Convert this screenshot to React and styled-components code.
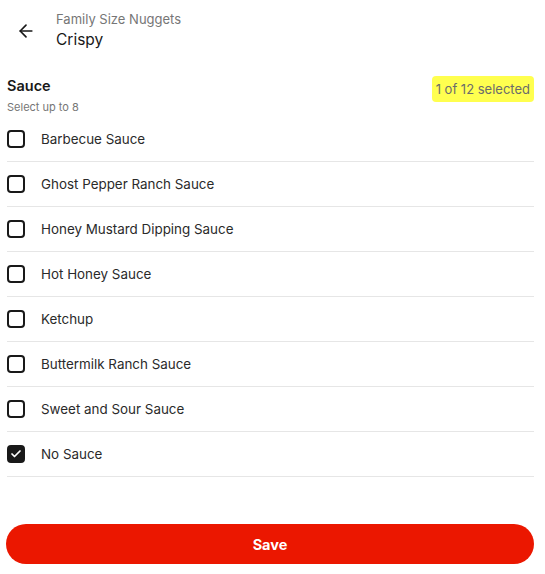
import React, { useState } from 'react';
import styled, { createGlobalStyle } from 'styled-components';
import { ArrowLeft, Check } from 'lucide-react';

const Global = createGlobalStyle`
  body {
    margin: 0;
    font-family: Inter, "Noto Sans", sans-serif;
    color: #191919;
    background: #fff;
  }
`;

const Page = styled.div`
  width: 545px;
  height: 574px;
  display: flex;
  flex-direction: column;
  padding: 0 11px 0 7px;
  box-sizing: border-box;
`;

const Header = styled.div`
  display: flex;
  align-items: center;
  gap: 20px;
  height: 62px;
  padding-left: 9px;
`;

const BackButton = styled.button`
  border: none;
  background: none;
  padding: 0;
  display: flex;
  color: #191919;
  cursor: pointer;
`;

const Titles = styled.div`
  display: flex;
  flex-direction: column;
  gap: 3px;
  padding-bottom: 2px;
`;

const Overline = styled.div`
  font-size: 13px;
  color: #767676;
`;

const Title = styled.div`
  font-size: 15.5px;
  color: #191919;
`;

const SectionHead = styled.div`
  display: flex;
  justify-content: space-between;
  align-items: flex-start;
  margin-top: 15px;
`;

const SectionName = styled.div`
  font-size: 14.5px;
  font-weight: 600;
  line-height: 18px;
`;

const Hint = styled.div`
  font-size: 11px;
  color: #767676;
  margin-top: 5px;
`;

const Badge = styled.div`
  background: #ffff4f;
  color: #6b6b6b;
  font-size: 13px;
  border-radius: 4px;
  padding: 5px 4px;
  line-height: 16px;
  margin-top: -1px;
`;

const List = styled.div`
  display: flex;
  flex-direction: column;
  margin-top: 3px;
`;

const Row = styled.label`
  display: flex;
  align-items: center;
  gap: 16px;
  height: 44px;
  border-bottom: 1px solid #e6e6e6;
  cursor: pointer;
  font-size: 13.4px;
  color: #2a2a2a;
`;

const Box = styled.span`
  width: 18px;
  height: 18px;
  box-sizing: border-box;
  border-radius: 4px;
  border: 2px solid #191919;
  background: ${p => (p.$on ? '#191919' : '#fff')};
  display: flex;
  align-items: center;
  justify-content: center;
  color: #fff;
`;

const Footer = styled.div`
  margin-top: auto;
  padding-bottom: 10px;
  margin-left: -1px;
`;

const SaveButton = styled.button`
  width: 100%;
  height: 40px;
  border: none;
  border-radius: 20px;
  background: #eb1700;
  color: #fff;
  font-family: Inter, sans-serif;
  font-size: 14.5px;
  font-weight: 700;
  cursor: pointer;
`;

const sauces = [
  'Barbecue Sauce',
  'Ghost Pepper Ranch Sauce',
  'Honey Mustard Dipping Sauce',
  'Hot Honey Sauce',
  'Ketchup',
  'Buttermilk Ranch Sauce',
  'Sweet and Sour Sauce',
  'No Sauce',
];

export default function App() {
  const [picked, setPicked] = useState(['No Sauce']);
  const toggle = name =>
    setPicked(p => (p.includes(name) ? p.filter(n => n !== name) : [...p, name]));

  return (
    <>
      <Global />
      <Page>
        <Header>
          <BackButton aria-label="Back">
            <ArrowLeft size={20} strokeWidth={2} />
          </BackButton>
          <Titles>
            <Overline>Family Size Nuggets</Overline>
            <Title>Crispy</Title>
          </Titles>
        </Header>

        <SectionHead>
          <div>
            <SectionName>Sauce</SectionName>
            <Hint>Select up to 8</Hint>
          </div>
          <Badge>{picked.length} of 12 selected</Badge>
        </SectionHead>

        <List>
          {sauces.map(s => {
            const on = picked.includes(s);
            return (
              <Row key={s} onClick={() => toggle(s)}>
                <Box $on={on}>{on && <Check size={12} strokeWidth={3.5} />}</Box>
                {s}
              </Row>
            );
          })}
        </List>

        <Footer>
          <SaveButton>Save</SaveButton>
        </Footer>
      </Page>
    </>
  );
}
